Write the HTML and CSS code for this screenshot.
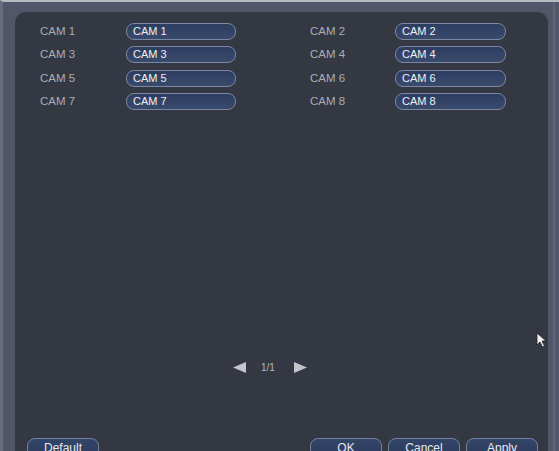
FILE: index.html
```html
<!DOCTYPE html>
<html>
<head>
<meta charset="utf-8">
<link rel="stylesheet" href="styles.css">
</head>
<body>
<div class="frame">
  <div class="panel">
    <div class="grid">
      <span class="lbl">CAM 1</span><span class="inp">CAM 1</span><span></span>
      <span class="lbl">CAM 2</span><span class="inp">CAM 2</span>
      <span class="lbl">CAM 3</span><span class="inp">CAM 3</span><span></span>
      <span class="lbl">CAM 4</span><span class="inp">CAM 4</span>
      <span class="lbl">CAM 5</span><span class="inp">CAM 5</span><span></span>
      <span class="lbl">CAM 6</span><span class="inp">CAM 6</span>
      <span class="lbl">CAM 7</span><span class="inp">CAM 7</span><span></span>
      <span class="lbl">CAM 8</span><span class="inp">CAM 8</span>
    </div>
    <div class="pager">
      <svg class="tri" width="13" height="11" viewBox="0 0 13 11"><path d="M0 5.5 L13 0 L13 11 Z" fill="#c3c5c9"/></svg>
      <span class="page">1/1</span>
      <svg class="tri" width="13" height="11" viewBox="0 0 13 11"><path d="M13 5.5 L0 0 L0 11 Z" fill="#c3c5c9"/></svg>
    </div>
    <div class="buttons">
      <span class="btn">Default</span>
      <span class="spacer"></span>
      <span class="btn">OK</span>
      <span class="btn">Cancel</span>
      <span class="btn">Apply</span>
    </div>
  </div>
  <svg class="cursor" width="11" height="16" viewBox="0 0 11 16"><path d="M1 1 L1 13 L4 10 L6.5 15 L8.5 14 L6 9 L10 9 Z" fill="#f2f2f2" stroke="#222" stroke-width="0.8"/></svg>
</div>
</body>
</html>
```

FILE: styles.css
```css
html, body {
  margin: 0;
  padding: 0;
  height: 451px;
  overflow: hidden;
  background: #52566a;
  font-family: "Liberation Sans", Arial, sans-serif;
}
.frame {
  position: relative;
  border-top: 2px solid #b9bbc2;
  border-left: 3px solid #686c7c;
  padding: 10px 11px 0 12px;
  height: 480px;
  box-sizing: border-box;
  background: #525669;
}
.frame::after {
  content: "";
  position: absolute;
  right: 4px;
  top: 0;
  bottom: 0;
  width: 2px;
  background: #60647a;
}
.panel {
  background: #343843;
  border-radius: 11px 11px 0 0;
  height: 470px;
  padding: 11px 0 0 11px;
  box-sizing: border-box;
  display: flex;
  flex-direction: column;
}
.grid {
  display: grid;
  margin-left: 14px;
  grid-template-columns: 86px 110px 74px 85px 111px;
  grid-auto-rows: 17px;
  row-gap: 6.3px;
  align-items: center;
}
.lbl {
  color: #a9adb6;
  font-size: 11.5px;
  line-height: 17px;
}
.inp {
  height: 17px;
  box-sizing: border-box;
  border: 1px solid #7c88a3;
  border-radius: 8px;
  background: linear-gradient(#2c3d60, #3a4a6c);
  color: #eef0f4;
  font-size: 11px;
  line-height: 15px;
  padding-left: 6px;
}
.pager {
  display: flex;
  align-items: center;
  margin-top: 252px;
  padding-left: 207px;
  gap: 15px;
}
.page {
  color: #b5b9c6;
  font-size: 10px;
  line-height: 12px;
}
.tri { display: block; }
.pager .tri:last-child { margin-left: 4px; }
.buttons {
  display: flex;
  margin-top: 64px;
  padding-left: 1px;
  padding-right: 10px;
  gap: 6px;
}
.spacer { flex: 1; }
.btn {
  width: 72px;
  height: 20px;
  box-sizing: border-box;
  border: 1px solid #75829f;
  border-radius: 8px;
  background: linear-gradient(#33456a, #2a3a5b);
  color: #e8eaf0;
  font-size: 12px;
  line-height: 18px;
  text-align: center;
}
.cursor {
  position: absolute;
  left: 533px;
  top: 330px;
}
```
